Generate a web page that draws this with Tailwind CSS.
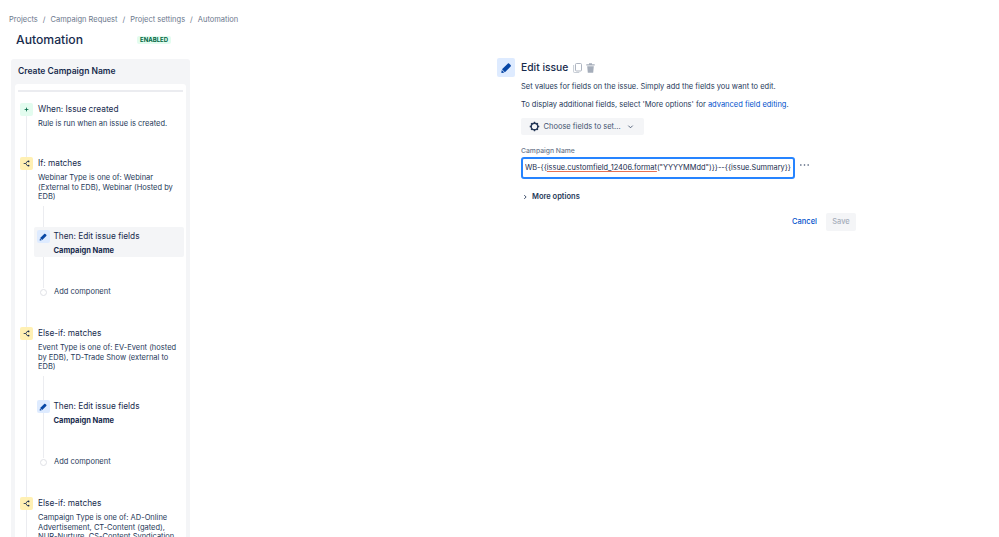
<!DOCTYPE html>
<html lang="en">
  <head>
    <meta charset="UTF-8" />
    <meta name="viewport" content="width=device-width, initial-scale=1" />
    <title>Automation</title>
    <script src="https://cdn.jsdelivr.net/npm/@tailwindcss/browser@4"></script>
  </head>
  <body class="bg-white h-[537px] overflow-hidden font-['Inter',sans-serif] text-[#172b4d]">
    <div class="flex h-[537px] overflow-hidden">
      <!-- left column -->
      <div class="w-[497px] shrink-0 pl-[9px] pt-[14px]">
        <nav class="flex gap-[5px] h-[12px] items-center text-[7.5px] text-[#6b778c]">
          <span>Projects</span><span>/</span><span>Campaign Request</span><span>/</span><span>Project settings</span><span>/</span><span>Automation</span>
        </nav>
        <div class="flex items-center pl-[7px] mt-[4px] h-[20px]">
          <h1 class="w-[121px] text-[12.2px] font-medium leading-none">Automation</h1>
          <span class="bg-[#e3fcef] text-[#006644] rounded-[2px] px-[3px] text-[6px] font-bold leading-[8px]">ENABLED</span>
        </div>

        <div class="ml-[2px] mt-[9px] w-[179px] h-[500px] bg-[#f4f5f7] rounded-[3px] px-[4px]">
          <h2 class="h-[25px] pl-[3px] flex items-center text-[8.5px] font-semibold">Create Campaign Name</h2>
          <div class="bg-white rounded-[3px] h-[470px] px-[3px] pt-[6px]">
            <div class="h-[1.5px] bg-[#ebecf0]"></div>

            <div class="mt-[11.5px] ml-[8px] border-l-[1.5px] border-[#ebecf0]">
              <!-- trigger -->
              <div class="h-[54px] -ml-[7px] flex gap-[5px]">
                <div class="w-[13px] h-[13px] rounded-[2px] bg-[#e3fcef] flex items-center justify-center shrink-0">
                  <svg viewBox="0 0 8 8" class="w-[5px] h-[5px]"><path d="M4 1v6M1 4h6" stroke="#006644" stroke-width="1.3"/></svg>
                </div>
                <div>
                  <div class="text-[8.3px] leading-[12px]">When: Issue created</div>
                  <div class="mt-[4px] text-[7.5px] leading-[9.5px] text-[#253858]">Rule is run when an issue is created.</div>
                </div>
              </div>

              <!-- if -->
              <div class="h-[170px] -ml-[7px]">
                <div class="flex gap-[5px]">
                  <div class="w-[13px] h-[13px] rounded-[2px] bg-[#fff0b3] flex items-center justify-center shrink-0">
                    <svg viewBox="0 0 10 10" class="w-[7px] h-[7px]"><path d="M1 5h3M8 2H6L4 5l2 3h2" fill="none" stroke="#172b4d" stroke-width="1.2"/><circle cx="8" cy="2" r="1.2" fill="#172b4d"/><circle cx="8" cy="8" r="1.2" fill="#172b4d"/></svg>
                  </div>
                  <div class="w-[141px]">
                    <div class="text-[8.3px] leading-[12px]">If: matches</div>
                    <div class="mt-[4px] text-[7.5px] leading-[9.5px] text-[#253858]">Webinar Type is one of: Webinar (External to EDB), Webinar (Hosted by EDB)</div>
                  </div>
                </div>
                <div class="mt-[4px] ml-[23px] h-[82.5px] pt-[21.5px] border-l-[1.5px] border-[#ebecf0]">
                  <div class="-ml-[10.5px] w-[150px] h-[30px] bg-[#f4f5f7] rounded-[2px] pl-[3px] pt-[3px] flex gap-[4px]">
                    <div class="w-[13px] h-[13px] rounded-[2px] bg-[#deebff] flex items-center justify-center shrink-0">
                      <svg viewBox="0 0 24 24" class="w-[10px] h-[10px]"><path fill="#0747a6" d="M4.02 19.23a1 1 0 001.18 1.18l3.81-.78-4.21-4.21-.78 3.81zM19.844 6.707l-2.12-2.122A1.997 1.997 0 0016.308 4c-.512 0-1.024.195-1.415.585l-9.757 9.758 4.95 4.95 9.757-9.758a2 2 0 000-2.828z"/></svg>
                    </div>
                    <div>
                      <div class="text-[8.3px] leading-[12px]">Then: Edit issue fields</div>
                      <div class="mt-[4px] text-[7.5px] font-bold leading-[9.5px]">Campaign Name</div>
                    </div>
                  </div>
                </div>
                <div class="ml-[20px] flex items-center gap-[7px] h-[8px]">
                  <span class="w-[7px] h-[7px] rounded-full border border-[#dfe1e6] bg-white"></span>
                  <span class="text-[7.5px] text-[#253858]">Add component</span>
                </div>
              </div>

              <!-- else-if -->
              <div class="h-[170px] -ml-[7px]">
                <div class="flex gap-[5px]">
                  <div class="w-[13px] h-[13px] rounded-[2px] bg-[#fff0b3] flex items-center justify-center shrink-0">
                    <svg viewBox="0 0 10 10" class="w-[7px] h-[7px]"><path d="M1 5h3M8 2H6L4 5l2 3h2" fill="none" stroke="#172b4d" stroke-width="1.2"/><circle cx="8" cy="2" r="1.2" fill="#172b4d"/><circle cx="8" cy="8" r="1.2" fill="#172b4d"/></svg>
                  </div>
                  <div class="w-[141px]">
                    <div class="text-[8.3px] leading-[12px]">Else-if: matches</div>
                    <div class="mt-[4px] text-[7.5px] leading-[9.5px] text-[#253858]">Event Type is one of: EV-Event (hosted by EDB), TD-Trade Show (external to EDB)</div>
                  </div>
                </div>
                <div class="mt-[4px] ml-[23px] h-[82.5px] pt-[21.5px] border-l-[1.5px] border-[#ebecf0]">
                  <div class="-ml-[10.5px] w-[150px] h-[30px] rounded-[2px] pl-[3px] pt-[3px] flex gap-[4px]">
                    <div class="w-[13px] h-[13px] rounded-[2px] bg-[#deebff] flex items-center justify-center shrink-0">
                      <svg viewBox="0 0 24 24" class="w-[10px] h-[10px]"><path fill="#0747a6" d="M4.02 19.23a1 1 0 001.18 1.18l3.81-.78-4.21-4.21-.78 3.81zM19.844 6.707l-2.12-2.122A1.997 1.997 0 0016.308 4c-.512 0-1.024.195-1.415.585l-9.757 9.758 4.95 4.95 9.757-9.758a2 2 0 000-2.828z"/></svg>
                    </div>
                    <div>
                      <div class="text-[8.3px] leading-[12px]">Then: Edit issue fields</div>
                      <div class="mt-[4px] text-[7.5px] font-bold leading-[9.5px]">Campaign Name</div>
                    </div>
                  </div>
                </div>
                <div class="ml-[20px] flex items-center gap-[7px] h-[8px]">
                  <span class="w-[7px] h-[7px] rounded-full border border-[#dfe1e6] bg-white"></span>
                  <span class="text-[7.5px] text-[#253858]">Add component</span>
                </div>
              </div>

              <!-- else-if, runs off the page -->
              <div class="-ml-[7px] flex gap-[5px]">
                <div class="w-[13px] h-[13px] rounded-[2px] bg-[#fff0b3] flex items-center justify-center shrink-0">
                  <svg viewBox="0 0 10 10" class="w-[7px] h-[7px]"><path d="M1 5h3M8 2H6L4 5l2 3h2" fill="none" stroke="#172b4d" stroke-width="1.2"/><circle cx="8" cy="2" r="1.2" fill="#172b4d"/><circle cx="8" cy="8" r="1.2" fill="#172b4d"/></svg>
                </div>
                <div class="w-[141px]">
                  <div class="text-[8.3px] leading-[12px]">Else-if: matches</div>
                  <div class="mt-[4px] text-[7.5px] leading-[9.5px] text-[#253858]">Campaign Type is one of: AD-Online Advertisement, CT-Content (gated), NUR-Nurture, CS-Content Syndication</div>
                </div>
              </div>
            </div>
          </div>
        </div>
      </div>

      <!-- right column -->
      <div class="pt-[58px] flex gap-[6px]">
        <div class="w-[18px] h-[19px] rounded-[2px] bg-[#deebff] flex items-center justify-center shrink-0">
          <svg viewBox="0 0 24 24" class="w-[14px] h-[14px]"><path fill="#0747a6" d="M4.02 19.23a1 1 0 001.18 1.18l3.81-.78-4.21-4.21-.78 3.81zM19.844 6.707l-2.12-2.122A1.997 1.997 0 0016.308 4c-.512 0-1.024.195-1.415.585l-9.757 9.758 4.95 4.95 9.757-9.758a2 2 0 000-2.828z"/></svg>
        </div>
        <div class="w-[335px]">
          <div class="flex items-center h-[19px]">
            <h3 class="text-[10.3px] font-medium">Edit issue</h3>
            <svg viewBox="0 0 9 10" class="ml-[5px] w-[9px] h-[10px]"><rect x="2.5" y=".5" width="6" height="7.5" rx="1" fill="none" stroke="#a5adba" stroke-width=".9"/><path d="M.6 2v6.8a.7.7 0 00.7.7h5" fill="none" stroke="#c1c7d0" stroke-width=".9"/></svg>
            <svg viewBox="0 0 9 10" class="ml-[4px] w-[9px] h-[10px]"><path fill="#a5adba" d="M.3 1.3h8.4v1.3H.3zM3 .2h3v1H3zM1.2 3.2h6.6l-.6 6.6H1.8z"/></svg>
          </div>
          <p class="mt-[5px] text-[7.5px] leading-[10px] text-[#253858]">Set values for fields on the issue. Simply add the fields you want to edit.</p>
          <p class="mt-[8px] text-[7.5px] leading-[10px] text-[#253858]">To display additional fields, select 'More options' for <a class="text-[#0052cc]">advanced field editing</a>.</p>
          <button class="mt-[8px] w-[123px] h-[17px] bg-[#f4f5f7] rounded-[2px] flex items-center pl-[8px] text-[7.5px] text-[#42526e]">
            <svg viewBox="0 0 12 12" class="w-[11px] h-[11px]"><circle cx="6" cy="6" r="3.6" fill="none" stroke="#253858" stroke-width="1.5"/><path d="M6 .8v1.8M6 9.4v1.8M.8 6h1.8M9.4 6h1.8M2.3 2.3l1.3 1.3M8.4 8.4l1.3 1.3M2.3 9.7l1.3-1.3M8.4 3.6l1.3-1.3" stroke="#253858" stroke-width="1.4"/></svg>
            <span class="ml-[3.5px]">Choose fields to set...</span>
            <svg viewBox="0 0 8 8" class="ml-[6px] w-[7px] h-[7px]"><path d="M1.5 3l2.5 2.5L6.5 3" fill="none" stroke="#42526e" stroke-width="1"/></svg>
          </button>
          <label class="block mt-[11px] h-[10px] text-[6.8px] leading-[10px] font-medium text-[#6b778c]">Campaign Name</label>
          <div class="mt-[1px] flex">
            <div class="w-[274px] h-[22px] rounded-[3px] border-2 border-[#2684ff] bg-white px-[2px] flex items-center">
              <div class="w-full flex justify-end overflow-hidden">
                <span class="shrink-0 whitespace-nowrap text-[7.4px] text-[#172b4d]">WB-{{<span class="underline decoration-[#de350b]/70 decoration-1 underline-offset-1">issue.customfield_12406.format</span>("YYYYMMdd")}}--{{issue.Summary}}</span>
              </div>
            </div>
            <svg viewBox="0 0 12 4" class="ml-[4px] mt-[6px] w-[11px] h-[4px]"><circle cx="2" cy="2" r=".9" fill="#42526e"/><circle cx="6" cy="2" r=".9" fill="#42526e"/><circle cx="10" cy="2" r=".9" fill="#42526e"/></svg>
          </div>
          <div class="mt-[12px] flex items-center h-[12px]">
            <svg viewBox="0 0 8 8" class="w-[6px] h-[6px] ml-[1px]"><path d="M3 1.5L5.5 4 3 6.5" fill="none" stroke="#172b4d" stroke-width="1.1"/></svg>
            <span class="ml-[4px] text-[7.5px] font-semibold text-[#253858]">More options</span>
          </div>
          <div class="mt-[10px] flex justify-end items-center gap-[9px]">
            <a class="text-[7.5px] font-medium text-[#0052cc]">Cancel</a>
            <button class="w-[30px] h-[18px] rounded-[2px] bg-[#f4f5f7] text-[7.5px] font-medium text-[#a5adba]">Save</button>
          </div>
        </div>
      </div>
    </div>
  </body>
</html>
